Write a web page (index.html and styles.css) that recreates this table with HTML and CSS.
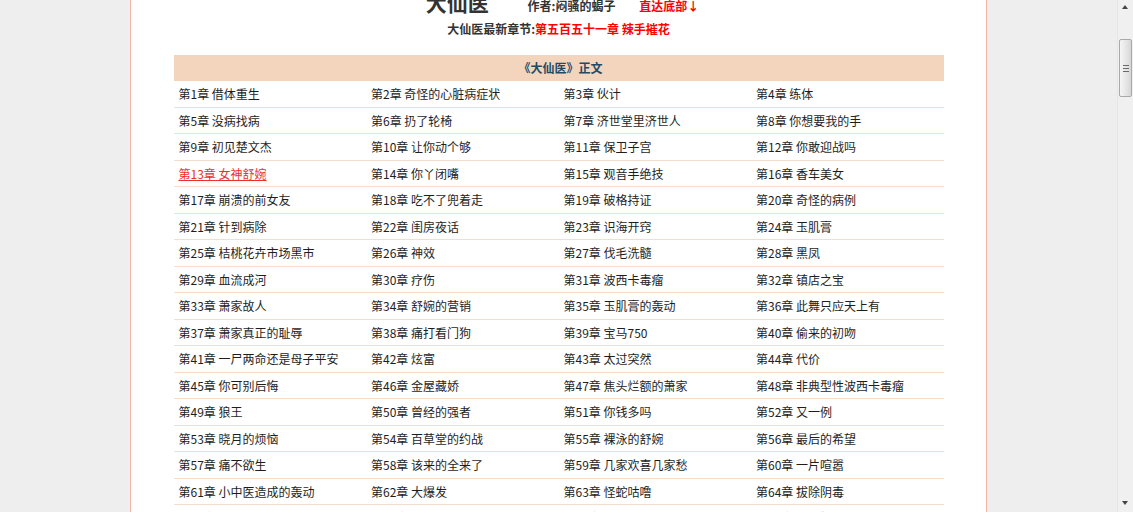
FILE: index.html
```html
<!DOCTYPE html>
<html lang="zh-CN">
<head>
<meta charset="utf-8">
<title>大仙医</title>
<link rel="stylesheet" href="styles.css">
</head>
<body>
<div class="page">
  <div class="viewport">
    <div class="container">
      <div class="top">
        <div class="line1">
          <span class="title">大仙医</span>
          <span class="author">作者:闷骚的蝎子</span>
          <a class="tobottom" href="#">直达底部↓</a>
        </div>
        <div class="line2">
          <span class="latest-label">大仙医最新章节:</span><a class="latest" href="#">第五百五十一章 辣手摧花</a>
        </div>
      </div>
      <div class="list">
        <div class="list-head">《大仙医》正文</div>
        <div class="grid">
          <a class="ch" href="#">第1章 借体重生</a>
          <a class="ch" href="#">第2章 奇怪的心脏病症状</a>
          <a class="ch" href="#">第3章 伙计</a>
          <a class="ch" href="#">第4章 练体</a>
          <a class="ch" href="#">第5章 没病找病</a>
          <a class="ch" href="#">第6章 扔了轮椅</a>
          <a class="ch" href="#">第7章 济世堂里济世人</a>
          <a class="ch" href="#">第8章 你想要我的手</a>
          <a class="ch" href="#">第9章 初见楚文杰</a>
          <a class="ch" href="#">第10章 让你动个够</a>
          <a class="ch" href="#">第11章 保卫子宫</a>
          <a class="ch" href="#">第12章 你敢迎战吗</a>
          <a class="ch active" href="#"><span>第13章 女神舒婉</span></a>
          <a class="ch" href="#">第14章 你丫闭嘴</a>
          <a class="ch" href="#">第15章 观音手绝技</a>
          <a class="ch" href="#">第16章 香车美女</a>
          <a class="ch" href="#">第17章 崩溃的前女友</a>
          <a class="ch" href="#">第18章 吃不了兜着走</a>
          <a class="ch" href="#">第19章 破格持证</a>
          <a class="ch" href="#">第20章 奇怪的病例</a>
          <a class="ch" href="#">第21章 针到病除</a>
          <a class="ch" href="#">第22章 闺房夜话</a>
          <a class="ch" href="#">第23章 识海开窍</a>
          <a class="ch" href="#">第24章 玉肌膏</a>
          <a class="ch" href="#">第25章 桔桃花卉市场黑市</a>
          <a class="ch" href="#">第26章 神效</a>
          <a class="ch" href="#">第27章 伐毛洗髓</a>
          <a class="ch" href="#">第28章 黑凤</a>
          <a class="ch" href="#">第29章 血流成河</a>
          <a class="ch" href="#">第30章 疗伤</a>
          <a class="ch" href="#">第31章 波西卡毒瘤</a>
          <a class="ch" href="#">第32章 镇店之宝</a>
          <a class="ch" href="#">第33章 萧家故人</a>
          <a class="ch" href="#">第34章 舒婉的营销</a>
          <a class="ch" href="#">第35章 玉肌膏的轰动</a>
          <a class="ch" href="#">第36章 此舞只应天上有</a>
          <a class="ch" href="#">第37章 萧家真正的耻辱</a>
          <a class="ch" href="#">第38章 痛打看门狗</a>
          <a class="ch" href="#">第39章 宝马750</a>
          <a class="ch" href="#">第40章 偷来的初吻</a>
          <a class="ch" href="#">第41章 一尸两命还是母子平安</a>
          <a class="ch" href="#">第42章 炫富</a>
          <a class="ch" href="#">第43章 太过突然</a>
          <a class="ch" href="#">第44章 代价</a>
          <a class="ch" href="#">第45章 你可别后悔</a>
          <a class="ch" href="#">第46章 金屋藏娇</a>
          <a class="ch" href="#">第47章 焦头烂额的萧家</a>
          <a class="ch" href="#">第48章 非典型性波西卡毒瘤</a>
          <a class="ch" href="#">第49章 狼王</a>
          <a class="ch" href="#">第50章 曾经的强者</a>
          <a class="ch" href="#">第51章 你钱多吗</a>
          <a class="ch" href="#">第52章 又一例</a>
          <a class="ch" href="#">第53章 晓月的烦恼</a>
          <a class="ch" href="#">第54章 百草堂的约战</a>
          <a class="ch" href="#">第55章 裸泳的舒婉</a>
          <a class="ch" href="#">第56章 最后的希望</a>
          <a class="ch" href="#">第57章 痛不欲生</a>
          <a class="ch" href="#">第58章 该来的全来了</a>
          <a class="ch" href="#">第59章 几家欢喜几家愁</a>
          <a class="ch" href="#">第60章 一片喧嚣</a>
          <a class="ch" href="#">第61章 小中医造成的轰动</a>
          <a class="ch" href="#">第62章 大爆发</a>
          <a class="ch" href="#">第63章 怪蛇咕噜</a>
          <a class="ch" href="#">第64章 拔除阴毒</a>
          <a class="ch" href="#">第65章 自作自受</a>
          <a class="ch" href="#">第66章 乱成一团</a>
          <a class="ch" href="#">第67章 意外之喜</a>
          <a class="ch" href="#">第68章 以德报怨</a>
        </div>
      </div>
    </div>
  </div>
  <div class="scrollbar">
    <div class="sb-arrow sb-up"></div>
    <div class="sb-thumb"><div class="grip"></div></div>
    <div class="sb-fill"></div>
    <div class="sb-arrow sb-down"></div>
  </div>
</div>
</body>
</html>
```

FILE: styles.css
```css
html, body {
  margin: 0;
  padding: 0;
  height: 100%;
  overflow: hidden;
}
body {
  background: #eeeeee;
  font-family: "Noto Sans CJK SC", "Noto Sans", sans-serif;
  font-size: 12px;
  color: #222;
}
a { text-decoration: none; }

.page {
  display: flex;
  height: 512px;
  overflow: hidden;
}
.viewport {
  flex: 1;
  display: flex;
  justify-content: center;
  overflow: hidden;
}
.container {
  width: 855px;
  background: #fff;
  border-left: 1px solid #f5b2a6;
  border-right: 1px solid #f5b2a6;
  height: 1200px;
}

.top {
  margin-top: -9px;
  text-align: center;
  font-weight: bold;
}
.line1 {
  height: 24px;
  line-height: 22px;
  white-space: nowrap;
  padding-left: 8px;
}
.title {
  font-size: 21px;
  color: #333;
  margin-right: 36px;
}
.author {
  color: #333;
  font-size: 12px;
  line-height: 12px;
}
.tobottom {
  color: #ff0000;
  font-size: 12px;
  line-height: 12px;
  margin-left: 21px;
}
.line2 {
  margin-top: 5px;
  line-height: 18px;
  height: 18px;
}
.latest-label { color: #333; }
.latest { color: #ff0000; }

.list {
  width: 770px;
  margin: 17px auto 0;
}
.list-head {
  height: 26px;
  line-height: 26px;
  background: #f3d4bd;
  text-align: center;
  font-weight: bold;
  color: #1f4a68;
  padding-left: 4px;
}
.grid {
  display: grid;
  grid-template-columns: repeat(4, 1fr);
  grid-auto-rows: 26.5px;
}
.ch {
  display: block;
  box-sizing: border-box;
  border-bottom: 1px solid #f6dcca;
  padding-left: 5px;
  line-height: 25.5px;
  color: #1e1e1e;
  white-space: nowrap;
}
.ch.active span {
  color: #e8302f;
  text-decoration: underline;
}

.scrollbar {
  width: 16px;
  height: 512px;
  background: #f0f0f0;
  border-left: 1px solid #e6e6e6;
  box-sizing: border-box;
  display: flex;
  flex-direction: column;
  align-items: center;
}
.sb-arrow {
  height: 16px;
  width: 100%;
  position: relative;
  flex: none;
}
.sb-up::after,
.sb-down::after {
  content: "";
  position: absolute;
  left: 4px;
  width: 0;
  height: 0;
  border-left: 3.5px solid transparent;
  border-right: 3.5px solid transparent;
}
.sb-up::after {
  top: 5px;
  border-bottom: 4px solid #444;
}
.sb-down::after {
  top: 5px;
  border-top: 4px solid #444;
}
.sb-thumb {
  margin-top: 23px;
  width: 13px;
  height: 58px;
  box-sizing: border-box;
  border: 1px solid #a9a9a9;
  border-radius: 2px;
  background: linear-gradient(to right, #f5f5f5, #e4e4e4 60%, #d6d6d6);
  display: flex;
  align-items: center;
  justify-content: center;
  flex: none;
}
.grip {
  width: 6px;
  height: 7px;
  background: repeating-linear-gradient(to bottom, #6a6a6a 0, #6a6a6a 1px, transparent 1px, transparent 3px);
}
.sb-fill { flex: 1; }
```
